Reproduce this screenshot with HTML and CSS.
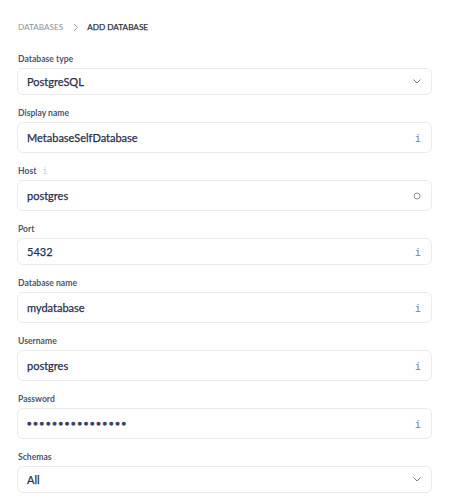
FILE: index.html
```html
<!DOCTYPE html>
<html lang="en">
<head>
    <meta charset="UTF-8">
    <meta name="viewport" content="width=device-width, initial-scale=1.0">
    <title>Add Database</title>
    <link rel="stylesheet" href="styles.css">
</head>
<body>
    <div class="page">
        <div class="breadcrumbs">
            <span class="crumb">DATABASES</span>
            <svg class="crumb-sep" width="6" height="9" viewBox="0 0 6 9"><path d="M1 1l3.5 3.5L1 8" fill="none" stroke="#a4a9b8" stroke-width="1"/></svg>
            <span class="crumb current">ADD DATABASE</span>
        </div>

        <form class="db-form">
            <div class="field">
                <label>Database type</label>
                <div class="box short">
                    <span class="value">PostgreSQL</span>
                    <svg class="icon" width="8" height="5" viewBox="0 0 8 5"><path d="M0.5 0.5l3.5 3.5 3.5-3.5" fill="none" stroke="#7c8296" stroke-width="1"/></svg>
                </div>
            </div>

            <div class="field">
                <label>Display name</label>
                <div class="box">
                    <span class="value">MetabaseSelfDatabase</span>
                    <span class="info">i</span>
                </div>
            </div>

            <div class="field">
                <label>Host <span class="label-info">i</span></label>
                <div class="box">
                    <span class="value">postgres</span>
                    <svg class="icon" width="8" height="8" viewBox="0 0 8 8"><circle cx="4" cy="4" r="3" fill="none" stroke="#8a90a3" stroke-width="1"/></svg>
                </div>
            </div>

            <div class="field">
                <label>Port</label>
                <div class="box short">
                    <span class="value">5432</span>
                    <span class="info">i</span>
                </div>
            </div>

            <div class="field">
                <label>Database name</label>
                <div class="box">
                    <span class="value">mydatabase</span>
                    <span class="info">i</span>
                </div>
            </div>

            <div class="field">
                <label>Username</label>
                <div class="box">
                    <span class="value">postgres</span>
                    <span class="info">i</span>
                </div>
            </div>

            <div class="field">
                <label>Password</label>
                <div class="box">
                    <span class="value dots">&#9679;&#9679;&#9679;&#9679;&#9679;&#9679;&#9679;&#9679;&#9679;&#9679;&#9679;&#9679;&#9679;&#9679;&#9679;&#9679;</span>
                    <span class="info">i</span>
                </div>
            </div>

            <div class="field">
                <label>Schemas</label>
                <div class="box short">
                    <span class="value">All</span>
                    <svg class="icon" width="8" height="5" viewBox="0 0 8 5"><path d="M0.5 0.5l3.5 3.5 3.5-3.5" fill="none" stroke="#7c8296" stroke-width="1"/></svg>
                </div>
            </div>
        </form>
    </div>
</body>
</html>
```

FILE: styles.css
```css
body {
    font-family: Lato, "Noto Sans", sans-serif;
    background-color: #fff;
    color: #27304d;
    margin: 0;
}

.page {
    width: 415px;
    padding: 20px 0 0 17px;
}

.breadcrumbs {
    display: flex;
    align-items: center;
    height: 14px;
    margin-bottom: 19px;
    padding-left: 1px;
    font-size: 8.2px;
}

.crumb {
    color: #8c92a4;
}

.crumb.current {
    color: #2e353b;
    -webkit-text-stroke: 0.25px #2e353b;
}

.crumb-sep {
    margin: 0 8px 0 10px;
}

.field {
    margin-bottom: 12px;
}

.field label {
    display: flex;
    align-items: center;
    height: 12px;
    margin-bottom: 3px;
    padding-left: 1px;
    font-size: 8.6px;
    font-weight: bold;
    color: #4c5773;
}

.label-info {
    margin-left: 6px;
    font-family: "DejaVu Sans Mono", monospace;
    font-weight: normal;
    font-size: 8px;
    color: #c2c6cf;
}

.box {
    display: flex;
    align-items: center;
    justify-content: space-between;
    box-sizing: border-box;
    height: 31px;
    padding: 0 9px 0 9px;
    border: 1px solid #ebebeb;
    border-radius: 6px;
    background: #fff;
}

.box.short {
    height: 27px;
}

.value {
    font-size: 11px;
    color: #27304d;
    -webkit-text-stroke: 0.25px #27304d;
}

.dots {
    font-size: 7.5px;
    letter-spacing: 1.8px;
    color: #3a4466;
}

.info {
    font-family: "DejaVu Sans Mono", monospace;
    font-size: 10.5px;
    color: #7c8296;
    margin-right: 1px;
}

.icon {
    margin-right: 1px;
}
```
